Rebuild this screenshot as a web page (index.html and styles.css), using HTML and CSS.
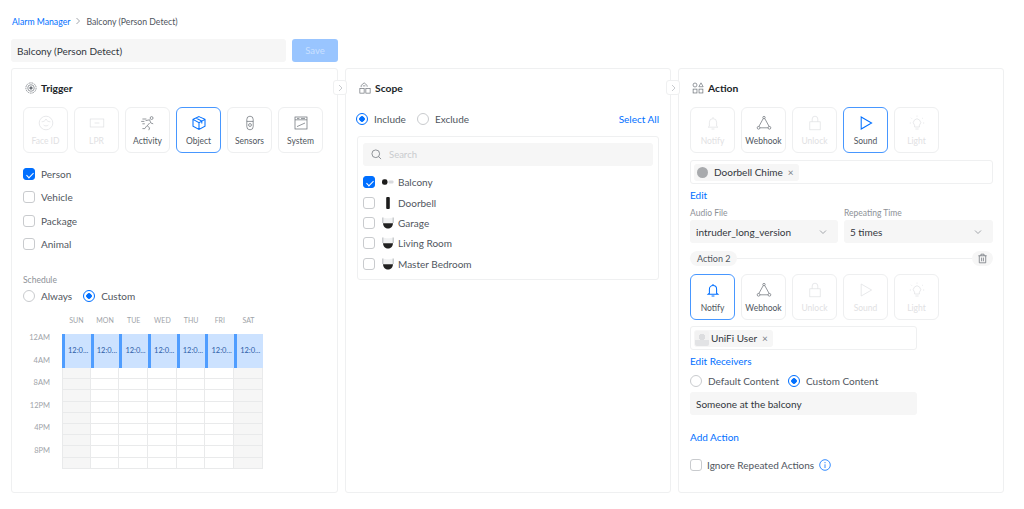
FILE: index.html
```html
<!DOCTYPE html>
<html lang="en">
<head>
    <meta charset="UTF-8">
    <meta name="viewport" content="width=device-width, initial-scale=1.0">
    <title>Balcony (Person Detect)</title>
    <link rel="stylesheet" href="styles.css">
</head>
<body>
    <svg class="defs" width="0" height="0">
        <symbol id="i-bell" viewBox="0 0 20 20"><path d="M10 2.500v1.500M5.500 14V9a4.500 4.500 0 0 1 9 0v5l1.500 1.200H4L5.500 14zM8.200 17.500h3.600"/></symbol>
        <symbol id="i-hook" viewBox="0 0 20 20"><path d="M9 4.500 3.500 14.500M11 4.500l5.500 10M5 16h10"/><circle cx="10" cy="3.200" r="1.500"/><circle cx="3.200" cy="16" r="1.700"/><circle cx="16.800" cy="16" r="1.700"/></symbol>
        <symbol id="i-lock" viewBox="0 0 20 20"><rect x="3.500" y="8.500" width="13" height="10"/><path d="M6.500 8.500V5a3.500 3.500 0 0 1 7 0v3.500"/></symbol>
        <symbol id="i-play" viewBox="0 0 20 20"><path d="M4 2.500 17 10 4 17.500z"/></symbol>
        <symbol id="i-light" viewBox="0 0 20 20"><path d="M7 15v-2.200A4.500 4.500 0 1 1 13 12.800V15zM8 17.500h4M10 2V.8M3.500 4.500l-1-1M16.500 4.500l1-1M2.500 10H1M17.500 10H19"/></symbol>
        <symbol id="i-dome" viewBox="0 0 12 12"><path d="M.8.500v5.500h10.400V.500C9 1.500 3 1.500.8.500z" fill="#f1f2f3"/><path d="M.8.500V6M11.200.500V6" stroke="#9a9ea4" stroke-width=".7" fill="none"/><path d="M1 6.200h10C10.800 9.500 8.500 11.500 6 11.500S1.200 9.500 1 6.200z" fill="#222"/></symbol>
    </svg>

    <nav class="crumbs"><a href="#">Alarm Manager</a><svg class="sep" viewBox="0 0 8 8"><path d="M2.500 1l3 3-3 3"/></svg><span>Balcony (Person Detect)</span></nav>

    <div class="title-row">
        <div class="field name">Balcony (Person Detect)</div>
        <button class="save">Save</button>
    </div>

    <main class="panels">
        <section class="panel">
            <h2>
                <svg class="head-icon" viewBox="0 0 14 14"><circle cx="7" cy="7" r="6" stroke-dasharray="2 .8"/><circle cx="7" cy="7" r="3.800"/><circle class="solid" cx="7" cy="7" r="1.500"/></svg>
                Trigger
            </h2>
            <div class="tiles">
                <div class="tile off">
                    <svg viewBox="0 0 20 20"><circle cx="10" cy="10" r="8.500"/><path d="M4.500 8.500c2.500 0 4.500-1 5.500-3.500 1 2.500 3 3.500 5.500 3.500M7 12.500c1.500 1.500 4.500 1.500 6 0"/></svg>
                    <span>Face ID</span>
                </div>
                <div class="tile off">
                    <svg viewBox="0 0 20 20"><rect x="1.500" y="5" width="17" height="10"/><path d="M7 10h6"/></svg>
                    <span>LPR</span>
                </div>
                <div class="tile">
                    <svg viewBox="0 0 20 20"><circle cx="14.500" cy="3.800" r="1.800"/><path d="M3 5h5M1.500 8h4M3 11h3M7 7l5-1 1.500 4 3 1M12 10l-3 3.500 3 2.500-1 3M8.500 13.500 6 17H3"/></svg>
                    <span>Activity</span>
                </div>
                <div class="tile on">
                    <svg viewBox="0 0 20 20"><path d="M10 2 17.500 5.500V14L10 18l-7.500-4V5.500zM2.500 5.500 10 9.500l7.500-4M10 9.500V18M6 3.800l7.500 3.900v3"/></svg>
                    <span>Object</span>
                </div>
                <div class="tile">
                    <svg viewBox="0 0 20 20"><rect x="6" y="1.500" width="8" height="17" rx="4"/><path d="M6 8h8"/><circle cx="10" cy="12.500" r="1.800"/></svg>
                    <span>Sensors</span>
                </div>
                <div class="tile">
                    <svg viewBox="0 0 20 20"><rect x="2.500" y="2.500" width="15" height="15"/><path d="M2.500 6h15M5 14.500 15 10M5 4.300h3M10 4.300h5"/></svg>
                    <span>System</span>
                </div>
            </div>

            <div class="checks">
                <label class="row"><i class="box checked"></i>Person</label>
                <label class="row"><i class="box"></i>Vehicle</label>
                <label class="row"><i class="box"></i>Package</label>
                <label class="row"><i class="box"></i>Animal</label>
            </div>

            <div class="small-label schedule-label">Schedule</div>
            <div class="radios">
                <label class="row"><i class="radio"></i>Always</label>
                <label class="row"><i class="radio picked"></i>Custom</label>
            </div>

            <div class="calendar">
                <div class="hours">
                    <span>12AM</span><span>4AM</span><span>8AM</span><span>12PM</span><span>4PM</span><span>8PM</span>
                </div>
                <div class="week">
                    <div class="day weekend"><b>SUN</b><div class="slot">12:0...</div><div class="rest"></div></div>
                    <div class="day"><b>MON</b><div class="slot">12:0...</div><div class="rest"></div></div>
                    <div class="day"><b>TUE</b><div class="slot">12:0...</div><div class="rest"></div></div>
                    <div class="day"><b>WED</b><div class="slot">12:0...</div><div class="rest"></div></div>
                    <div class="day"><b>THU</b><div class="slot">12:0...</div><div class="rest"></div></div>
                    <div class="day"><b>FRI</b><div class="slot">12:0...</div><div class="rest"></div></div>
                    <div class="day weekend"><b>SAT</b><div class="slot">12:0...</div><div class="rest"></div></div>
                </div>
            </div>
            <button class="tab"><svg viewBox="0 0 8 8"><path d="M3 1l3 3-3 3"/></svg></button>
        </section>

        <section class="panel">
            <h2>
                <svg class="head-icon" viewBox="0 0 14 14"><path d="M2.500 6V4l3.500-3 3.500 3v1.500"/><rect x="1" y="7.500" width="5" height="5.500"/><rect x="8" y="7.500" width="5" height="5.500"/><path d="M4.500 4.500h3"/></svg>
                Scope
            </h2>
            <div class="scope-bar">
                <label class="row"><i class="radio picked"></i>Include</label>
                <label class="row"><i class="radio"></i>Exclude</label>
                <a class="select-all" href="#">Select All</a>
            </div>
            <div class="device-box">
                <div class="field search">
                    <svg viewBox="0 0 12 12"><circle cx="5.200" cy="5.200" r="4.200"/><path d="M8.300 8.300 11 11"/></svg>
                    Search
                </div>
                <label class="device"><i class="box checked"></i>
                    <svg class="cam" viewBox="0 0 12 12"><rect x="0" y="3.200" width="5.500" height="5.600" rx="2.200" fill="#1c1c1c"/><rect x="6.500" y="4.500" width="5" height="3" rx="1" fill="#d8dade"/></svg>
                    Balcony</label>
                <label class="device"><i class="box"></i>
                    <svg class="cam" viewBox="0 0 12 12"><rect x="4.200" y="0" width="3.600" height="12" rx="1" fill="#1c1c1c"/></svg>
                    Doorbell</label>
                <label class="device"><i class="box"></i>
                    <svg class="cam"><use href="#i-dome"/></svg>
                    Garage</label>
                <label class="device"><i class="box"></i>
                    <svg class="cam"><use href="#i-dome"/></svg>
                    Living Room</label>
                <label class="device"><i class="box"></i>
                    <svg class="cam"><use href="#i-dome"/></svg>
                    Master Bedroom</label>
            </div>
            <button class="tab"><svg viewBox="0 0 8 8"><path d="M3 1l3 3-3 3"/></svg></button>
        </section>

        <section class="panel">
            <h2>
                <svg class="head-icon" viewBox="0 0 14 14"><circle cx="3.500" cy="3.500" r="2.300"/><path d="M10.500 1 13 5.500H8z"/><rect x="1.300" y="8.300" width="4.500" height="4.500"/><rect x="8.200" y="8.300" width="4.500" height="4.500"/></svg>
                Action
            </h2>
            <div class="tiles">
                <div class="tile off"><svg><use href="#i-bell"/></svg><span>Notify</span></div>
                <div class="tile"><svg><use href="#i-hook"/></svg><span>Webhook</span></div>
                <div class="tile off"><svg><use href="#i-lock"/></svg><span>Unlock</span></div>
                <div class="tile on"><svg><use href="#i-play"/></svg><span>Sound</span></div>
                <div class="tile off"><svg><use href="#i-light"/></svg><span>Light</span></div>
            </div>
            <div class="chip-box">
                <span class="chip"><i class="chip-dot"></i>Doorbell Chime<em>&times;</em></span>
            </div>
            <a class="link edit" href="#">Edit</a>
            <div class="selects">
                <div>
                    <div class="small-label">Audio File</div>
                    <div class="field select">intruder_long_version<svg viewBox="0 0 8 8"><path d="M1 2.500 4 5.500 7 2.500"/></svg></div>
                </div>
                <div>
                    <div class="small-label">Repeating Time</div>
                    <div class="field select">5 times<svg viewBox="0 0 8 8"><path d="M1 2.500 4 5.500 7 2.500"/></svg></div>
                </div>
            </div>
            <div class="divider">
                <span class="pill">Action 2</span>
                <span class="line"></span>
                <span class="trash"><svg viewBox="0 0 12 12"><path d="M1.500 3h9M4.300 3V1.300h3.400V3M2.500 3v7.700h7V3M5 5v4M7 5v4"/></svg></span>
            </div>
            <div class="tiles">
                <div class="tile on"><svg><use href="#i-bell"/></svg><span>Notify</span></div>
                <div class="tile"><svg><use href="#i-hook"/></svg><span>Webhook</span></div>
                <div class="tile off"><svg><use href="#i-lock"/></svg><span>Unlock</span></div>
                <div class="tile off"><svg><use href="#i-play"/></svg><span>Sound</span></div>
                <div class="tile off"><svg><use href="#i-light"/></svg><span>Light</span></div>
            </div>
            <div class="chip-box narrow">
                <span class="chip"><i class="chip-user"></i>UniFi User<em>&times;</em></span>
            </div>
            <a class="link receivers" href="#">Edit Receivers</a>
            <div class="radios content">
                <label class="row"><i class="radio"></i>Default Content</label>
                <label class="row"><i class="radio picked"></i>Custom Content</label>
            </div>
            <div class="field message">Someone at the balcony</div>
            <a class="link add" href="#">Add Action</a>
            <label class="row ignore"><i class="box"></i>Ignore Repeated Actions
                <svg class="info" viewBox="0 0 12 12"><circle cx="6" cy="6" r="5.300"/><path d="M6 5.300V9M6 3v1.200"/></svg>
            </label>
        </section>
    </main>
</body>
</html>
```

FILE: styles.css
```css
* {
    box-sizing: border-box;
}

body {
    margin: 0;
    padding: 15px 0 0 11px;
    height: 509px;
    overflow: hidden;
    background: #fff;
    font-family: Lato, "Noto Sans", sans-serif;
    font-size: 10px;
    color: #50565e;
}

a {
    color: #006fff;
    text-decoration: none;
}

.defs {
    position: absolute;
}

.crumbs {
    display: flex;
    align-items: center;
    height: 12px;
    padding-left: 1px;
    font-size: 8.700px;
    color: #50565e;
}

.sep {
    width: 8px;
    height: 8px;
    margin: 0 4px;
    fill: none;
    stroke: #8d9197;
    stroke-width: .8;
}

.title-row {
    display: flex;
    gap: 6px;
    margin-top: 12px;
}

.field {
    background: #f6f6f6;
    border-radius: 3px;
    display: flex;
    align-items: center;
    height: 23px;
}

.name {
    width: 275px;
    padding-left: 6px;
    font-size: 10px;
    color: #32373d;
}

.save {
    width: 46px;
    height: 23px;
    border: none;
    border-radius: 3px;
    background: #99c5ff;
    color: #c9e0ff;
    font: inherit;
    font-size: 9.500px;
}

.panels {
    display: flex;
    gap: 7px;
    margin-top: 6px;
}

.panel {
    position: relative;
    flex: 0 0 326px;
    height: 425px;
    padding: 12px 11px 0;
    border: 1px solid #eff0f1;
    border-radius: 3px;
}

.panel:first-child {
    flex-basis: 327px;
}

.panel:last-child {
    padding-right: 10px;
}

.panel h2 {
    display: flex;
    align-items: center;
    gap: 4px;
    height: 14px;
    margin: 0;
    padding-left: 2px;
    font-size: 10.300px;
    font-weight: 700;
    color: #212529;
}

.head-icon {
    width: 12px;
    height: 12px;
    fill: none;
    stroke: #6a6f76;
    stroke-width: .8;
}

.head-icon .solid {
    fill: #6a6f76;
}

.tab {
    position: absolute;
    top: 11px;
    right: -10px;
    z-index: 2;
    width: 14px;
    height: 15px;
    padding: 0;
    background: #fff;
    border: 1px solid #eff0f1;
    border-radius: 3px;
}

.tab svg {
    display: block;
    width: 8px;
    height: 8px;
    margin: auto;
    fill: none;
    stroke: #c8cbcf;
}

.tiles {
    display: flex;
    gap: 6px;
    margin-top: 12px;
}

.tile {
    display: flex;
    flex-direction: column;
    align-items: center;
    width: 45px;
    height: 46px;
    padding-top: 7px;
    border: 1px solid #eeeff0;
    border-radius: 6px;
    font-size: 8.500px;
    color: #50565e;
}

.tile svg {
    width: 16px;
    height: 16px;
    margin-bottom: 5px;
    fill: none;
    stroke: #6a6f76;
    stroke-width: .9;
}

.tile.off {
    color: #dfe1e3;
}

.tile.off svg {
    stroke: #dfe1e3;
}

.tile.on {
    border-color: #4797ff;
}

.tile.on svg {
    stroke: #006fff;
    stroke-width: 1.300;
}

.row {
    display: flex;
    align-items: center;
    gap: 6px;
    color: #50565e;
}

.box {
    flex: none;
    width: 12px;
    height: 12px;
    background: #fff;
    border: 1px solid #c9cbce;
    border-radius: 3px;
}

.box.checked {
    border-color: #006fff;
    background: #006fff;
    position: relative;
}

.box.checked::after {
    content: "";
    position: absolute;
    left: 3.500px;
    top: 1.500px;
    width: 3px;
    height: 6px;
    border: solid #fff;
    border-width: 0 1px 1px 0;
    transform: rotate(45deg);
}

.radio {
    flex: none;
    width: 12px;
    height: 12px;
    background: #fff;
    border: 1px solid #c9cbce;
    border-radius: 50%;
}

.radio.picked {
    border-color: #006fff;
    background: radial-gradient(circle, #006fff 0 2.500px, #fff 3px);
}

.checks {
    display: flex;
    flex-direction: column;
    gap: 11.300px;
    margin-top: 15px;
}

.checks .row {
    height: 12px;
}

.small-label {
    font-size: 8.500px;
    color: #8d9197;
    line-height: 11px;
}

.schedule-label {
    margin-top: 25px;
}

.radios {
    display: flex;
    gap: 11px;
    margin-top: 4px;
}

.calendar {
    display: flex;
    margin-top: 14px;
}

.hours {
    display: flex;
    flex-direction: column;
    width: 39px;
    padding-top: 16.500px;
}

.hours span {
    height: 22.500px;
    padding-right: 12px;
    font-size: 7.500px;
    line-height: 11px;
    text-align: right;
    color: #a0a4a9;
}

.week {
    display: grid;
    grid-template-columns: repeat(7, 28.700px);
}

.day {
    min-width: 0;
}

.day b {
    display: block;
    height: 18px;
    font-size: 7px;
    font-weight: 400;
    line-height: 8px;
    text-align: center;
    color: #a0a4a9;
}

.slot {
    height: 34px;
    padding-left: 3px;
    overflow: hidden;
    white-space: nowrap;
    border-left: 3px solid #4f9dff;
    background: #cce2ff;
    font-size: 7.500px;
    line-height: 34px;
    color: #2c5ea8;
}

.rest {
    height: 101px;
    border-right: 1px solid #e9eaeb;
    border-bottom: 1px solid #e9eaeb;
    background: repeating-linear-gradient(to bottom, transparent 0 10.200px, #e9eaeb 10.200px 11.200px);
}

.day:first-child .rest {
    border-left: 1px solid #e9eaeb;
}

.day.weekend .rest {
    background-color: #f6f6f6;
}

.scope-bar {
    display: flex;
    align-items: center;
    gap: 11px;
    margin: 17px 0 0 -1px;
    height: 14px;
}

.select-all {
    margin-left: auto;
    font-size: 10px;
}

.device-box {
    height: 144px;
    margin-top: 10px;
    padding: 6px 5px 0;
    border: 1px solid #eff0f1;
    border-radius: 3px;
}

.search {
    gap: 7px;
    padding-left: 8px;
    margin-bottom: 6px;
    color: #c9cbce;
    font-size: 9.500px;
}

.search svg {
    width: 11px;
    height: 11px;
    fill: none;
    stroke: #6a6f76;
    stroke-width: .8;
}

.device {
    display: flex;
    align-items: center;
    height: 20.400px;
}

.cam {
    width: 12px;
    height: 12px;
    margin: 0 4px 0 7px;
}

.chip-box {
    display: flex;
    align-items: center;
    height: 24px;
    margin-top: 7px;
    padding-left: 3px;
    border: 1px solid #eff0f1;
    border-radius: 3px;
}

.chip-box.narrow {
    width: 227px;
    margin-top: 6px;
}

.chip {
    display: flex;
    align-items: center;
    height: 17px;
    padding: 0 5px 0 3px;
    background: #f6f6f6;
    border-radius: 3px;
    color: #32373d;
}

.chip em {
    margin-left: 5px;
    font-style: normal;
    color: #7b8087;
}

.chip-dot {
    width: 11px;
    height: 11px;
    margin-right: 6px;
    border-radius: 50%;
    background: #a8aaad;
}

.chip-user {
    width: 14px;
    height: 15px;
    margin: 0 2px 0 -2px;
    border-radius: 2px;
    background: radial-gradient(circle at 50% 40%, #dcdddf 0 3px, transparent 3.500px), linear-gradient(to bottom, #f2f2f2 60%, #e2e3e5 60%);
}

.link {
    display: block;
    font-size: 10px;
    line-height: 12px;
}

.edit {
    margin-top: 5px;
}

.selects {
    display: grid;
    grid-template-columns: 148px 149px;
    gap: 6px;
    margin-top: 7px;
}

.select {
    justify-content: space-between;
    margin-top: 1px;
    padding: 0 11px 0 6px;
    color: #32373d;
}

.select svg {
    width: 8px;
    height: 8px;
    fill: none;
    stroke: #8d9197;
    stroke-width: .8;
}

.divider {
    display: flex;
    align-items: center;
    height: 15px;
    margin-top: 8px;
}

.pill {
    height: 15px;
    padding: 0 7px;
    border-radius: 8px;
    background: #f6f6f6;
    font-size: 9px;
    line-height: 15px;
}

.line {
    flex: 1;
    height: 1px;
    background: #eff0f1;
}

.trash {
    display: flex;
    align-items: center;
    justify-content: center;
    width: 21px;
    height: 15px;
    border-radius: 8px;
    background: #f6f6f6;
}

.trash svg {
    width: 11px;
    height: 11px;
    fill: none;
    stroke: #6a6f76;
    stroke-width: .8;
}

.divider + .tiles {
    margin-top: 8px;
}

.receivers {
    margin-top: 5px;
}

.radios.content {
    gap: 9px;
    margin-top: 8px;
}

.message {
    width: 227px;
    margin-top: 5px;
    padding-left: 6px;
    color: #32373d;
}

.add {
    margin-top: 16px;
}

.ignore {
    gap: 5px;
    margin-top: 16px;
}

.info {
    width: 12px;
    height: 12px;
    fill: none;
    stroke: #006fff;
    stroke-width: .8;
}
```
